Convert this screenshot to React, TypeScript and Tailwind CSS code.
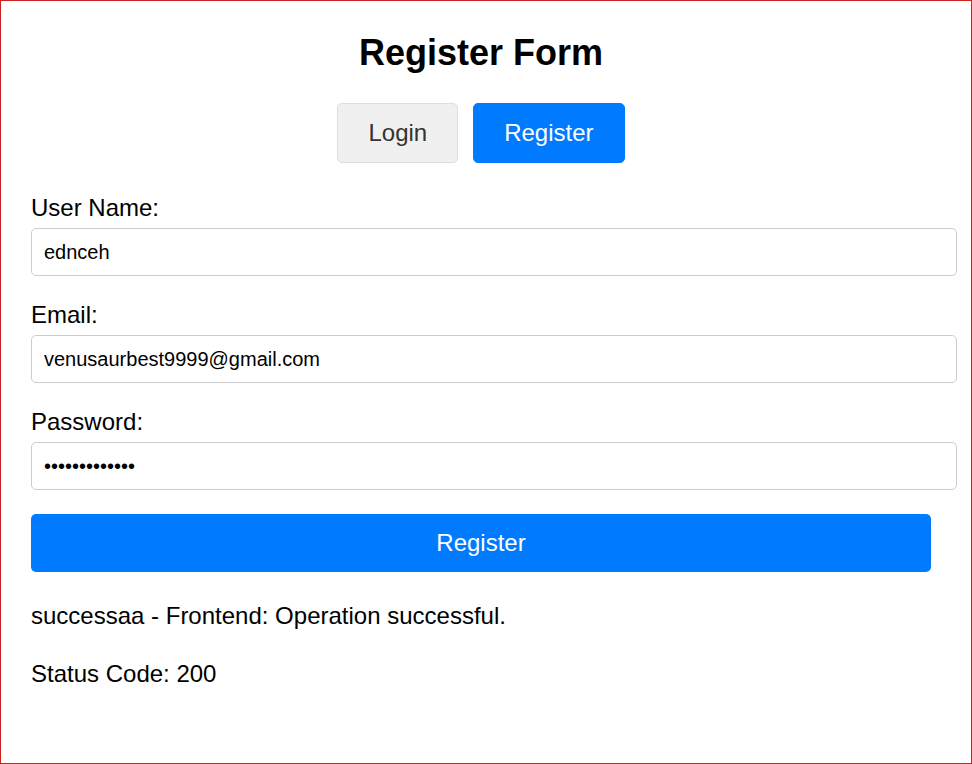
import React, { useState } from 'react';

export default function App() {
  const [mode, setMode] = useState<'login' | 'register'>('register');

  return (
    <div
      className="h-[764px] w-[972px] overflow-hidden border border-[#cc1f1f] bg-white text-black"
      style={{ fontFamily: '"Liberation Sans", Arial, sans-serif' }}
    >
      <div className="w-[930px] pl-[30px] pt-[31px]">
        <h1 className="text-center text-[36px] font-bold leading-[42px]">Register Form</h1>

        {/* Tabs */}
        <div className="mt-[29px] flex justify-center gap-[15px]">
          <button
            type="button"
            onClick={() => setMode('login')}
            className={`h-[60px] rounded-[5px] border px-[30px] text-[24px] ${
              mode === 'login'
                ? 'border-[#007bff] bg-[#007bff] text-white'
                : 'border-[#dddddd] bg-[#f0f0f0] text-[#333333]'
            }`}
          >
            Login
          </button>
          <button
            type="button"
            onClick={() => setMode('register')}
            className={`h-[60px] rounded-[5px] border px-[30px] text-[24px] ${
              mode === 'register'
                ? 'border-[#007bff] bg-[#007bff] text-white'
                : 'border-[#dddddd] bg-[#f0f0f0] text-[#333333]'
            }`}
          >
            Register
          </button>
        </div>

        <form onSubmit={(e) => e.preventDefault()} className="mt-[31px]">
          {/* User Name */}
          <div>
            <label className="block text-[24px] leading-[28px]">User Name:</label>
            <input
              type="text"
              defaultValue="ednceh"
              className="mt-[6px] h-[48px] w-[926px] rounded-[5px] border border-[#cccccc] px-[12px] text-[20px] text-black outline-none"
            />
          </div>

          {/* Email */}
          <div className="mt-[25px]">
            <label className="block text-[24px] leading-[28px]">Email:</label>
            <input
              type="email"
              defaultValue="venusaurbest9999@gmail.com"
              className="mt-[6px] h-[48px] w-[926px] rounded-[5px] border border-[#cccccc] px-[12px] text-[20px] text-black outline-none"
            />
          </div>

          {/* Password */}
          <div className="mt-[25px]">
            <label className="block text-[24px] leading-[28px]">Password:</label>
            <input
              type="password"
              defaultValue="venusaur12345"
              className="mt-[6px] h-[48px] w-[926px] rounded-[5px] border border-[#cccccc] px-[12px] text-[20px] text-black outline-none"
            />
          </div>

          <button
            type="submit"
            className="mt-[24px] h-[58px] w-[900px] rounded-[5px] bg-[#007bff] text-[24px] text-white"
          >
            Register
          </button>
        </form>

        <p className="mt-[30px] text-[24px] leading-[28px]">successaa - Frontend: Operation successful.</p>
        <p className="mt-[30px] text-[24px] leading-[28px]">Status Code: 200</p>
      </div>
    </div>
  );
}
